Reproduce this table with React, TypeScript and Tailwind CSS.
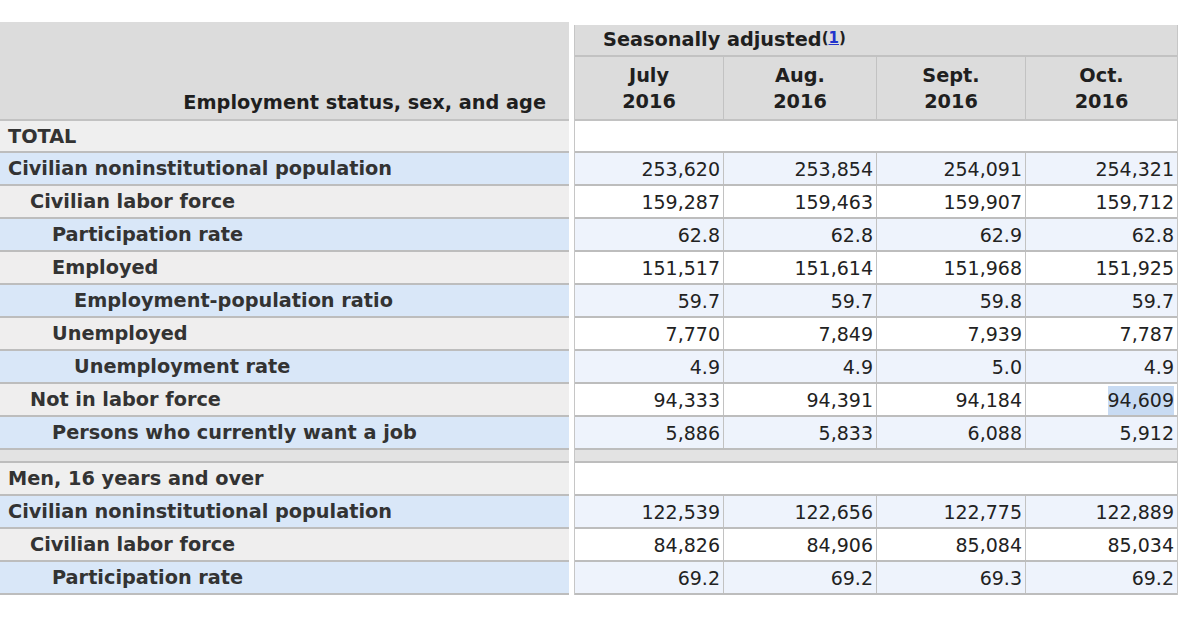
import React from 'react';

type Row =
  | { kind: 'section'; label: string }
  | { kind: 'spacer' }
  | { kind: 'data'; label: string; level: number; values: string[]; blue: boolean; selected?: number };

const rows: Row[] = [
  { kind: 'section', label: 'TOTAL' },
  { kind: 'data', label: 'Civilian noninstitutional population', level: 0, blue: true, values: ['253,620', '253,854', '254,091', '254,321'] },
  { kind: 'data', label: 'Civilian labor force', level: 1, blue: false, values: ['159,287', '159,463', '159,907', '159,712'] },
  { kind: 'data', label: 'Participation rate', level: 2, blue: true, values: ['62.8', '62.8', '62.9', '62.8'] },
  { kind: 'data', label: 'Employed', level: 2, blue: false, values: ['151,517', '151,614', '151,968', '151,925'] },
  { kind: 'data', label: 'Employment-population ratio', level: 3, blue: true, values: ['59.7', '59.7', '59.8', '59.7'] },
  { kind: 'data', label: 'Unemployed', level: 2, blue: false, values: ['7,770', '7,849', '7,939', '7,787'] },
  { kind: 'data', label: 'Unemployment rate', level: 3, blue: true, values: ['4.9', '4.9', '5.0', '4.9'] },
  { kind: 'data', label: 'Not in labor force', level: 1, blue: false, values: ['94,333', '94,391', '94,184', '94,609'], selected: 3 },
  { kind: 'data', label: 'Persons who currently want a job', level: 2, blue: true, values: ['5,886', '5,833', '6,088', '5,912'] },
  { kind: 'spacer' },
  { kind: 'section', label: 'Men, 16 years and over' },
  { kind: 'data', label: 'Civilian noninstitutional population', level: 0, blue: true, values: ['122,539', '122,656', '122,775', '122,889'] },
  { kind: 'data', label: 'Civilian labor force', level: 1, blue: false, values: ['84,826', '84,906', '85,084', '85,034'] },
  { kind: 'data', label: 'Participation rate', level: 2, blue: true, values: ['69.2', '69.2', '69.3', '69.2'] },
];

const months = [
  ['July', '2016'],
  ['Aug.', '2016'],
  ['Sept.', '2016'],
  ['Oct.', '2016'],
];

// Einrückung pro Ebene (22px)
const indent = ['pl-[8px]', 'pl-[30px]', 'pl-[52px]', 'pl-[74px]'];

function rowHeight(r: Row, i: number) {
  if (r.kind === 'spacer') return 'h-[13px]';
  if (i === 0) return 'h-[32px]';
  return 'h-[33px]';
}

export default function App() {
  return (
    <div
      className="w-[1200px] h-[623px] bg-white overflow-hidden pt-[22px]"
      style={{ fontFamily: '"DejaVu Sans", Verdana, sans-serif' }}
    >
      <div className="flex items-start gap-[5px]">
        {/* linke Spalte: Beschriftungen */}
        <div className="w-[569px] flex flex-col">
          <div className="h-[99px] bg-[#dcdcdc] border-b-2 border-[#c2c2c2] flex items-end justify-end pr-[23px] pb-[7px]">
            <span className="text-[19.3px] font-bold text-[#1f1f1f] leading-none">Employment status, sex, and age</span>
          </div>
          {rows.map((r, i) => {
            if (r.kind === 'spacer')
              return <div key={i} className={`${rowHeight(r, i)} bg-[#e3e3e3] border-b-2 border-[#bdbdbd]`} />;
            const bg = r.kind === 'section' ? 'bg-[#efefef]' : r.blue ? 'bg-[#d9e7f8]' : 'bg-[#efeeee]';
            const pad = r.kind === 'section' ? indent[0] : indent[r.level];
            return (
              <div
                key={i}
                className={`${rowHeight(r, i)} ${bg} ${pad} pt-[2px] border-b-2 border-[#bdbdbd] flex items-center text-[19.3px] font-bold text-[#333]`}
              >
                {r.label}
              </div>
            );
          })}
        </div>

        {/* rechte Tabelle: Werte */}
        <div className="w-[604px] mt-[3px] flex flex-col border-l border-r border-[#c6c6c6]">
          <div className="h-[32px] bg-[#dcdcdc] border-b-2 border-[#c2c2c2] flex items-center pl-[28px]">
            <span className="text-[19.3px] font-bold text-[#1f1f1f] leading-none">
              Seasonally adjusted
              <span className="text-[15px] font-bold relative -top-[3px]">
                (<span className="text-[#2233cc] underline">1</span>)
              </span>
            </span>
          </div>
          <div className="h-[64px] bg-[#dcdcdc] border-b-2 border-[#c2c2c2] grid grid-cols-[148px_153px_149px_1fr]">
            {months.map(([m, y], j) => (
              <div
                key={m}
                className={`flex flex-col items-center justify-center pt-[1px] text-[19.3px] font-bold text-[#1f1f1f] leading-[26px] ${j > 0 ? 'border-l border-[#c2c2c2]' : ''}`}
              >
                <span>{m}</span>
                <span>{y}</span>
              </div>
            ))}
          </div>
          {rows.map((r, i) => {
            if (r.kind === 'spacer')
              return <div key={i} className={`${rowHeight(r, i)} bg-[#e3e3e3] border-b-2 border-[#bdbdbd]`} />;
            if (r.kind === 'section')
              return <div key={i} className={`${rowHeight(r, i)} bg-white border-b-2 border-[#bdbdbd]`} />;
            return (
              <div
                key={i}
                className={`${rowHeight(r, i)} ${r.blue ? 'bg-[#eef3fc]' : 'bg-white'} border-b-2 border-[#bdbdbd] grid grid-cols-[148px_153px_149px_1fr]`}
              >
                {r.values.map((v, j) => (
                  <div
                    key={j}
                    className={`flex items-center justify-end pr-[3px] pt-[2px] text-[19px] text-[#222] ${j > 0 ? 'border-l border-[#c2c2c2]' : ''}`}
                  >
                    <span className={r.selected === j ? 'bg-[#c8dbf3]' : ''}>{v}</span>
                  </div>
                ))}
              </div>
            );
          })}
        </div>
      </div>
    </div>
  );
}
